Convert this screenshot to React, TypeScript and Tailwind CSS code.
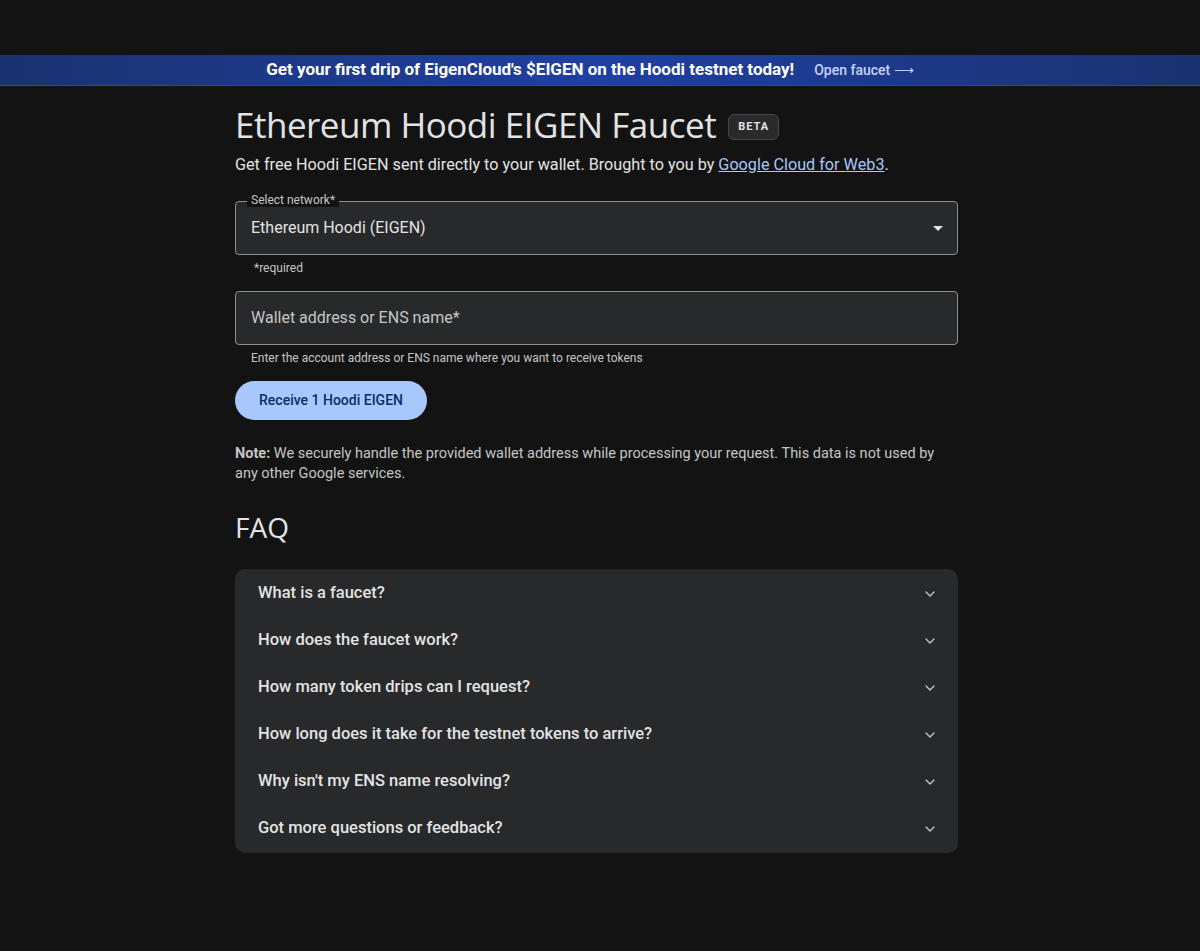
import { ChevronDown } from 'lucide-react'

const faqs = [
  'What is a faucet?',
  'How does the faucet work?',
  'How many token drips can I request?',
  'How long does it take for the testnet tokens to arrive?',
  "Why isn't my ENS name resolving?",
  'Got more questions or feedback?',
]

export default function App() {
  return (
    <div className="min-h-[951px] bg-[#131314] pt-[55px] font-['Roboto',sans-serif] text-[#e3e3e3]">
      <div className="flex h-[31px] items-center justify-center gap-5 bg-gradient-to-r from-[#1b3270] via-[#1f3fa2] to-[#1b3270] border-b border-[#2d4a9a] pr-[20px]">
        <span className="text-[17px] font-bold text-white">
          Get your first drip of EigenCloud's $EIGEN on the Hoodi testnet today!
        </span>
        <span className="text-[14px] font-medium text-[#c2d4ff]">Open faucet ⟶</span>
      </div>

      <main className="ml-[235px] w-[723px] pt-[15px]">
        <div className="flex items-center gap-3">
          <h1 className="font-['Open_Sans',sans-serif] text-[35px] leading-[48px] tracking-[-0.5px] text-[#e3e3e3]">
            Ethereum Hoodi EIGEN Faucet
          </h1>
          <span className="mt-1 rounded-md border border-[#444746] bg-[#2a2a2c] px-[9px] py-[4px] text-[11px] font-bold tracking-[1px] text-[#e3e3e3]">
            BETA
          </span>
        </div>
        <p className="mt-[4px] text-[16.2px] text-[#e3e3e3]">
          Get free Hoodi EIGEN sent directly to your wallet. Brought to you by{' '}
          <a href="#" className="text-[#a8c7fa] underline">
            Google Cloud for Web3
          </a>
          .
        </p>

        <div className="relative mt-[24px]">
          <div className="flex h-[54px] items-center justify-between rounded-[4px] border border-[#8e918f] bg-[#28292b] pl-[15px] pr-[14px]">
            <span className="text-[16px] text-[#e3e3e3]">Ethereum Hoodi (EIGEN)</span>
            <svg width="10" height="5" viewBox="0 0 10 5">
              <path d="M0 0 L5 5 L10 0 Z" fill="#e3e3e3" />
            </svg>
          </div>
          <span className="absolute left-[12px] top-[-8px] bg-[#131314] px-[4px] text-[12px] leading-[14px] text-[#c4c7c5]">
            Select network*
          </span>
        </div>
        <p className="mt-[4px] pl-[19px] text-[12px] text-[#c4c7c5]">*required</p>

        <div className="mt-[14px] flex h-[54px] items-center rounded-[4px] border border-[#8e918f] bg-[#28292b] px-[15px]">
          <span className="text-[16px] text-[#c4c7c5]">Wallet address or ENS name*</span>
        </div>
        <p className="mt-[4px] pl-[16px] text-[12px] text-[#c4c7c5]">
          Enter the account address or ENS name where you want to receive tokens
        </p>

        <button className="mt-[14px] h-[39px] w-[192px] rounded-full bg-[#a8c7fa] text-[14px] font-medium text-[#062e6f]">
          Receive 1 Hoodi EIGEN
        </button>

        <p className="mt-[24px] pr-[10px] text-[14.5px] leading-[20px] text-[#c4c7c5]">
          <span className="font-bold">Note:</span> We securely handle the provided wallet address while
          processing your request. This data is not used by any other Google services.
        </p>

        <h2 className="mt-[25px] font-['Open_Sans',sans-serif] text-[28px] leading-[36px] text-[#e3e3e3]">
          FAQ
        </h2>

        <div className="mt-[24px] overflow-hidden rounded-[10px] bg-[#28292b] py-[1px]">
          {faqs.map((q) => (
            <div key={q} className="flex h-[47px] items-center justify-between pl-[23px] pr-[20px]">
              <span className="text-[16.5px] font-medium text-[#e3e3e3]">{q}</span>
              <ChevronDown size={16} strokeWidth={2} className="text-[#c4c7c5]" />
            </div>
          ))}
        </div>
      </main>
    </div>
  )
}
